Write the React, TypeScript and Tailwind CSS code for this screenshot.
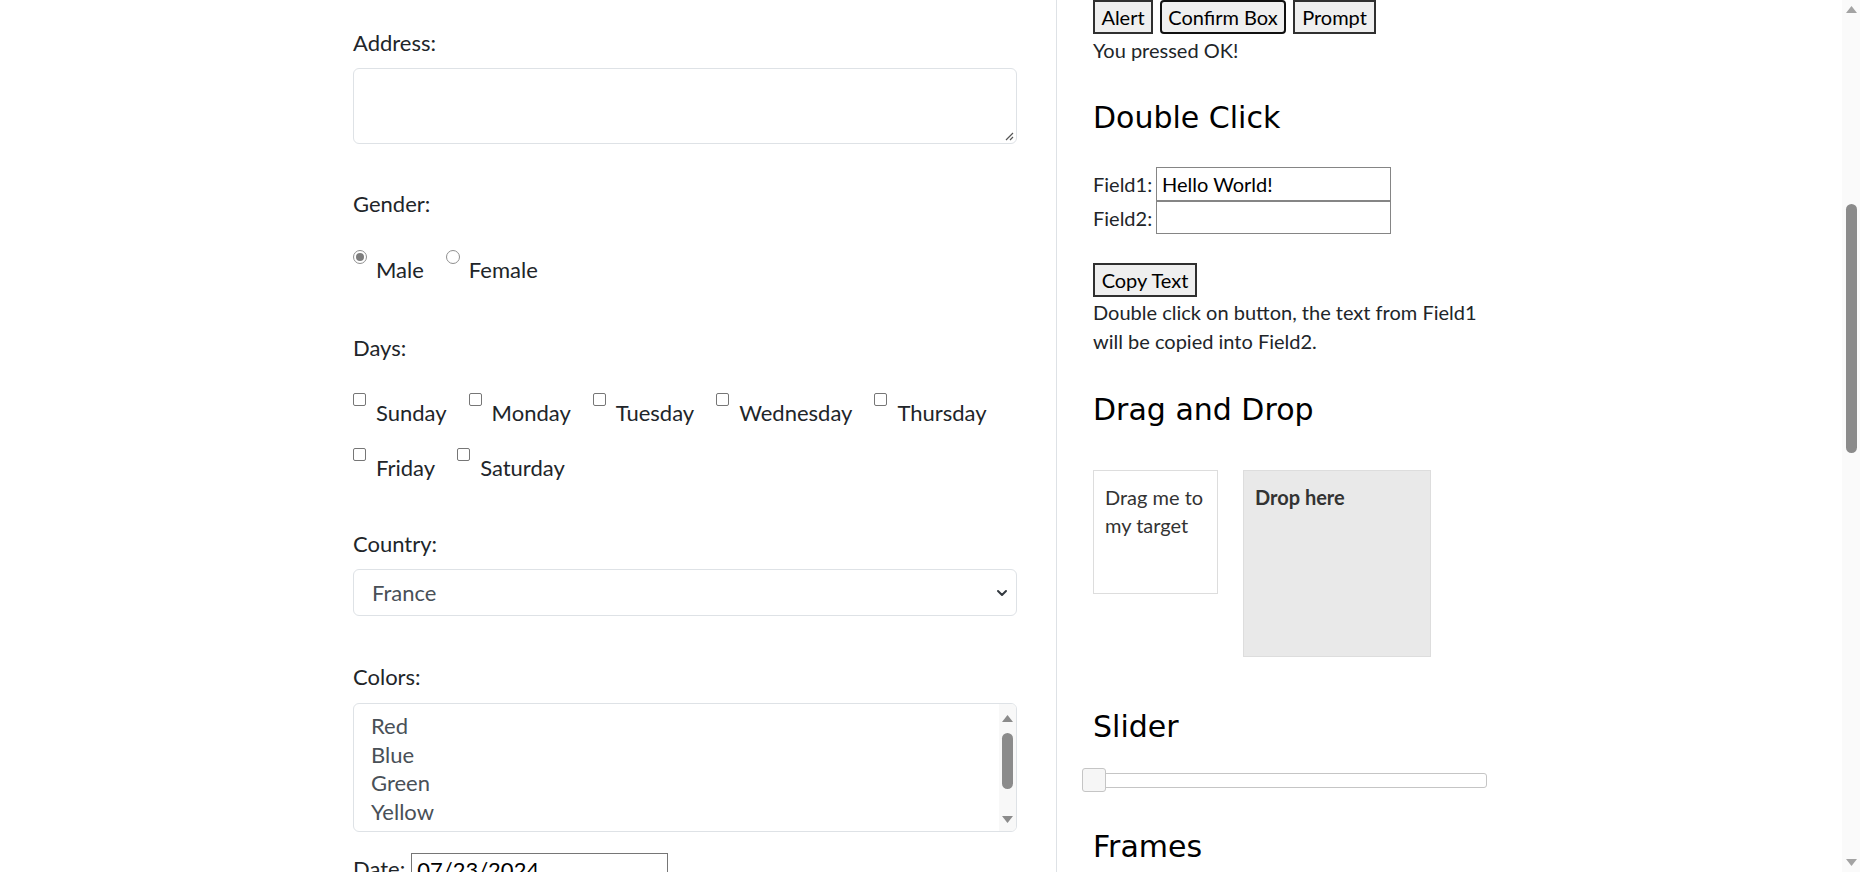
const days1 = ['Sunday', 'Monday', 'Tuesday', 'Wednesday', 'Thursday']
const days2 = ['Friday', 'Saturday']
const colors = ['Red', 'Blue', 'Green', 'Yellow', 'White']

const Check = ({ label }: { label: string }) => (
  <div className="flex items-start mr-[22px]">
    <span className="w-[13px] h-[13px] rounded-[2px] border border-[#767676] bg-white" />
    <span className="ml-[10px] pt-[5px] leading-[30px]">{label}</span>
  </div>
)

const Radio = ({ label, checked }: { label: string; checked?: boolean }) => (
  <div className="flex items-start mr-[22px]">
    <span className="w-[14px] h-[14px] rounded-full border border-[#8f8f8f] bg-white flex items-center justify-center">
      {checked && <span className="w-[8px] h-[8px] rounded-full bg-[#7d7d7d]" />}
    </span>
    <span className="ml-[9px] pt-[5px] leading-[30px]">{label}</span>
  </div>
)

const Heading = ({ children, className }: { children: string; className?: string }) => (
  <h2 className={"font-['DejaVu_Sans',sans-serif] text-[30px] leading-[36px] text-black " + (className ?? '')}>
    {children}
  </h2>
)

const LeftForm = () => {
  return (
    <div className="w-[1057px] shrink-0 border-r border-[#dee2e6] pl-[353px] pr-[39px] pt-[28px] text-[22px] text-[#212529]">
      <div className="leading-[30px]">Address:</div>
      <div className="mt-[10px] h-[76px] rounded-[6px] border border-[#dee2e6] relative">
        <svg className="absolute right-[2px] bottom-[2px]" width="10" height="10" viewBox="0 0 10 10">
          <path d="M9 2 L2 9 M9 6 L6 9" stroke="#555" strokeWidth="1.2" />
        </svg>
      </div>

      <div className="mt-[45px] leading-[30px]">Gender:</div>
      <div className="mt-[31px] flex">
        <Radio label="Male" checked />
        <Radio label="Female" />
      </div>

      <div className="mt-[48px] leading-[30px]">Days:</div>
      <div className="mt-[30px] flex">
        {days1.map((d) => (
          <Check key={d} label={d} />
        ))}
      </div>
      <div className="mt-[20px] flex">
        {days2.map((d) => (
          <Check key={d} label={d} />
        ))}
      </div>

      <div className="mt-[46px] leading-[30px]">Country:</div>
      <div className="mt-[10px] h-[47px] rounded-[6px] border border-[#dee2e6] flex items-center justify-between pl-[18px] pr-[8px] text-[#495057]">
        <span>France</span>
        <svg width="12" height="10" viewBox="0 0 12 10">
          <path d="M2 3 L6 7 L10 3" fill="none" stroke="#343a40" strokeWidth="2" strokeLinecap="round" strokeLinejoin="round" />
        </svg>
      </div>

      <div className="mt-[46px] leading-[30px]">Colors:</div>
      <div className="mt-[11px] h-[129px] rounded-[6px] border border-[#dee2e6] flex overflow-hidden">
        <div className="flex-1 pl-[17px] pt-[8px] text-[#495057]">
          {colors.map((c) => (
            <div key={c} className="leading-[28.6px]">
              {c}
            </div>
          ))}
        </div>
        <div className="w-[17px] bg-[#f8f8f8] flex flex-col items-center pt-[11px] pb-[8px]">
          <svg width="11" height="7" viewBox="0 0 11 7">
            <path d="M5.5 0 L11 7 L0 7 Z" fill="#8b8b8b" />
          </svg>
          <div className="mt-[11px] w-[11px] h-[56px] rounded-full bg-[#8b8b8b]" />
          <div className="flex-1" />
          <svg width="11" height="7" viewBox="0 0 11 7">
            <path d="M0 0 L11 0 L5.5 7 Z" fill="#8b8b8b" />
          </svg>
        </div>
      </div>

      <div className="mt-[21px] flex items-start">
        <span className="pt-[1px] leading-[30px]">Date:</span>
        <div className="ml-[6px] w-[257px] h-[38px] border border-[#767676] pl-[5px] pt-[1px] leading-[30px] text-black">
          07/23/2024
        </div>
      </div>
    </div>
  )
}

const RightPanel = () => {
  const btn = 'h-[34px] bg-[#efefef] border-2 text-black flex items-center justify-center leading-none'
  return (
    <div className="flex-1 pl-[36px] text-[20px] text-[#212529]">
      <div className="flex gap-[7px]">
        <button className={btn + ' w-[60px] border-[#303030]'}>Alert</button>
        <button className={btn + ' w-[126px] border-[#101010] rounded-[4px]'}>Confirm Box</button>
        <button className={btn + ' w-[83px] border-[#303030]'}>Prompt</button>
      </div>
      <p className="h-[32px] leading-[32px]">You pressed OK!</p>

      <Heading className="mt-[34px]">Double Click</Heading>
      <div className="mt-[31px]">
        <div className="flex items-center h-[34px]">
          <span className="w-[63px]">Field1:</span>
          <div className="w-[235px] h-[34px] border border-[#858585] pl-[5px] leading-[32px] text-black">Hello World!</div>
        </div>
        <div className="flex items-center h-[33px]">
          <span className="w-[63px]">Field2:</span>
          <div className="w-[235px] h-[33px] border border-[#858585]" />
        </div>
      </div>
      <button className={btn + ' mt-[29px] w-[104px] border-[#303030]'}>Copy Text</button>
      <p className="mt-[1px] leading-[29px] whitespace-nowrap">
        Double click on button, the text from Field1
        <br />
        will be copied into Field2.
      </p>

      <Heading className="mt-[36px]">Drag and Drop</Heading>
      <div className="mt-[42px] flex items-start gap-[25px]">
        <div className="w-[125px] h-[124px] border border-[#dddddd] bg-white pl-[11px] pt-[12px] leading-[28px] text-[#333]">
          Drag me to
          <br />
          my target
        </div>
        <div className="w-[188px] h-[187px] border border-[#dddddd] bg-[#e9e9e9] pl-[11px] pt-[12px] leading-[28px] font-bold text-[#333]">
          Drop here
        </div>
      </div>

      <Heading className="mt-[52px]">Slider</Heading>
      <div className="mt-[28px] relative w-[394px] h-[15px] rounded-[3px] border border-[#c5c5c5] bg-white">
        <span className="absolute left-[-12px] top-[-6px] w-[24px] h-[24px] rounded-[3px] border border-[#c5c5c5] bg-[#f6f6f6]" />
      </div>

      <Heading className="mt-[41px]">Frames</Heading>
    </div>
  )
}

const PageScrollbar = () => (
  <div className="w-[18px] shrink-0 bg-[#fafafa] flex flex-col items-center pt-[6px] pb-[6px]">
    <svg width="11" height="7" viewBox="0 0 11 7">
      <path d="M5.5 0 L11 7 L0 7 Z" fill="#a3a3a3" />
    </svg>
    <div className="mt-[191px] w-[11px] h-[249px] rounded-full bg-[#8b8b8b]" />
    <div className="flex-1" />
    <svg width="11" height="7" viewBox="0 0 11 7">
      <path d="M0 0 L11 0 L5.5 7 Z" fill="#a3a3a3" />
    </svg>
  </div>
)

export default function App() {
  return (
    <div className="h-[872px] w-full overflow-hidden bg-white flex font-['Lato',sans-serif]">
      <LeftForm />
      <RightPanel />
      <PageScrollbar />
    </div>
  )
}
